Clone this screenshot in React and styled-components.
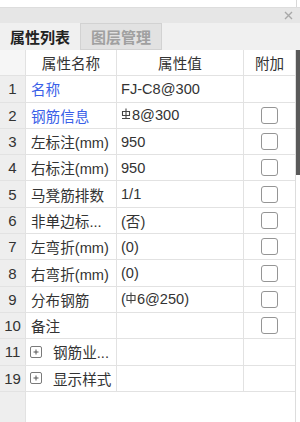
import React from "react"
import styled, { createGlobalStyle } from "styled-components"

const GlobalStyle = createGlobalStyle`
html, body {
  margin: 0;
  padding: 0;
  background: #ffffff;
}
body {
  font-family: "Liberation Sans", "Noto Sans CJK SC", sans-serif;
  color: #333333;
}
`

const Page = styled.div`
width: 300px;
height: 422px;
overflow: hidden;
display: flex;
flex-direction: column;
background: #ffffff;
`
const TopStrip = styled.div`
height: 7px;
border-bottom: 1px solid #dddddd;
display: flex;
justify-content: flex-end;
`
const TopEdge = styled.div`
width: 3px;
border-left: 1px solid #d8d8d8;
`
const TitleBar = styled.div`
height: 15px;
background: #e6e6e6;
display: flex;
align-items: center;
justify-content: flex-end;
padding-right: 7px;
`
const Tabs = styled.div`
height: 27px;
background: #f0f0f0;
display: flex;
`
const Tab = styled.div`
width: ${p => p.$w}px;
box-sizing: border-box;
display: flex;
align-items: center;
justify-content: center;
font-family: "Noto Sans CJK SC", sans-serif;
font-size: 15px;
font-weight: bold;
color: ${p => (p.$active ? "#222222" : "#a0a0a0")};
background: ${p => (p.$active ? "#f0f0f0" : "#e2e2e2")};
border: ${p => (p.$active ? "none" : "1px solid #d2d2d2")};
`
const Body = styled.div`
flex: 1;
display: flex;
min-height: 0;
`
const Table = styled.div`
width: 295px;
border-right: 1px solid #dddddd;
display: flex;
flex-direction: column;
`
const Row = styled.div`
display: grid;
grid-template-columns: 26px 91px 127px 51px;
height: 26.3px;
box-sizing: border-box;
border-bottom: 1px solid #e2e2e2;
`
const Cell = styled.div`
box-sizing: border-box;
border-right: 1px solid #e2e2e2;
display: flex;
align-items: center;
justify-content: ${p => (p.$center ? "center" : "flex-start")};
padding-left: ${p => (p.$center ? 0 : p.$pad || 5)}px;
font-size: 14.6px;
white-space: nowrap;
overflow: hidden;
color: ${p => (p.$blue ? "#3a5fe8" : "#333333")};
&:last-child {
  border-right: none;
}
`
const NumCell = styled(Cell)`
justify-content: center;
padding-left: 0;
font-size: 15px;
color: #333333;
background: ${p => (p.$head ? "#f6f6f6" : "#eeeeee")};
`
const Filler = styled.div`
flex: 1;
display: flex;
`
const FillerNum = styled.div`
width: 26px;
box-sizing: border-box;
background: #eeeeee;
border-right: 1px solid #e2e2e2;
`
const Check = styled.div`
width: 17px;
height: 17px;
box-sizing: border-box;
border: 1px solid #959595;
border-radius: 3px;
background: #ffffff;
`
const PlusBox = styled.div`
width: 12px;
height: 12px;
box-sizing: border-box;
border: 1px solid #7a7a7a;
border-radius: 2px;
display: flex;
align-items: center;
justify-content: center;
margin-right: 11px;
margin-left: -1px;
`
const Scroll = styled.div`
width: 4px;
display: flex;
flex-direction: column;
`
const Thumb = styled.div`
height: 125px;
background: #5a5a5a;
`

const CloseIcon = () => (
  <svg width="9" height="9" viewBox="0 0 9 9">
    <path d="M1 1L8 8M8 1L1 8" stroke="#a8a8a8" strokeWidth="1.4" />
  </svg>
)

const PlusIcon = () => (
  <svg width="8" height="8" viewBox="0 0 8 8">
    <path d="M4 1.5V6.5M1.5 4H6.5" stroke="#555" strokeWidth="1" />
  </svg>
)

// HRB400 rebar symbol
const Grade3 = () => (
  <svg width="10" height="12" viewBox="0 0 10 12" style={{ marginRight: 1, marginBottom: 3 }}>
    <path d="M5 0.5V10.5M1.5 3.5H8.5V7.5H1.5ZM1 10.5H9" stroke="#444" strokeWidth="1.1" fill="none" />
  </svg>
)

// HPB300 rebar symbol
const Grade1 = () => (
  <svg width="10" height="12" viewBox="0 0 10 12" style={{ marginRight: 1, marginBottom: 2 }}>
    <path d="M5 0.5V11.5M1 3.5H9V8.5H1Z" stroke="#444" strokeWidth="1.1" fill="none" />
  </svg>
)

const rows = [
  { n: "1", name: "名称", value: "FJ-C8@300", blue: true },
  { n: "2", name: "钢筋信息", value: <><Grade3 />8@300</>, blue: true, check: true },
  { n: "3", name: "左标注(mm)", value: "950", check: true },
  { n: "4", name: "右标注(mm)", value: "950", check: true },
  { n: "5", name: "马凳筋排数", value: "1/1", check: true },
  { n: "6", name: "非单边标...", value: "(否)", check: true },
  { n: "7", name: "左弯折(mm)", value: "(0)", check: true },
  { n: "8", name: "右弯折(mm)", value: "(0)", check: true },
  { n: "9", name: "分布钢筋", value: <>(<Grade1 />6@250)</>, check: true },
  { n: "10", name: "备注", value: "", check: true },
  { n: "11", name: "钢筋业...", value: "", group: true },
  { n: "19", name: "显示样式", value: "", group: true },
]

export default function App() {
  return (
    <Page>
      <GlobalStyle />
      <TopStrip><TopEdge /></TopStrip>
      <TitleBar><CloseIcon /></TitleBar>
      <Tabs>
        <Tab $active $w={80}>属性列表</Tab>
        <Tab $w={82}>图层管理</Tab>
      </Tabs>
      <Body>
        <Table>
          <Row>
            <NumCell $head />
            <Cell $center>属性名称</Cell>
            <Cell $center>属性值</Cell>
            <Cell $center>附加</Cell>
          </Row>
          {rows.map(r => (
            <Row key={r.n}>
              <NumCell>{r.n}</NumCell>
              <Cell $blue={r.blue}>
                {r.group && <PlusBox><PlusIcon /></PlusBox>}
                {r.name}
              </Cell>
              <Cell $pad={4}>{r.value}</Cell>
              <Cell $center>{r.check && <Check />}</Cell>
            </Row>
          ))}
          <Filler>
            <FillerNum />
          </Filler>
        </Table>
        <Scroll><Thumb /></Scroll>
      </Body>
    </Page>
  )
}
